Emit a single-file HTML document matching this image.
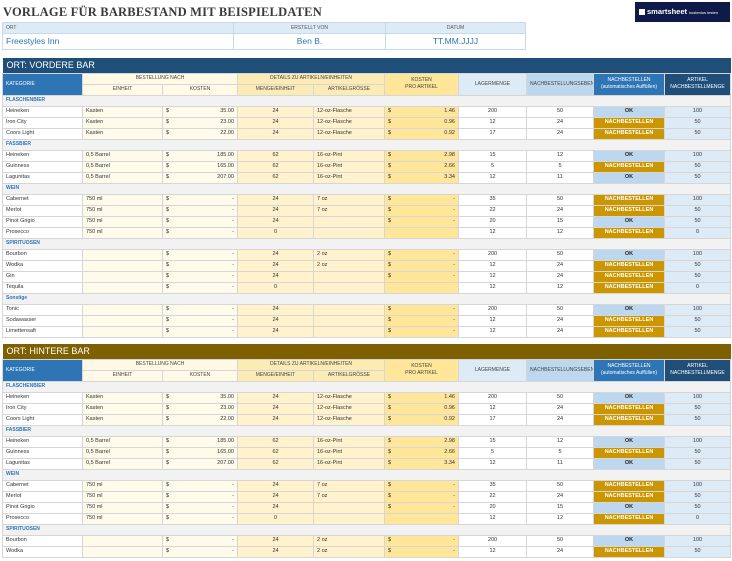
<!DOCTYPE html><html><head><meta charset="utf-8"><style>
*{box-sizing:border-box;margin:0;padding:0}
body{width:732px;height:561px;background:#fff;font-family:"Liberation Sans",sans-serif;position:relative;overflow:hidden;color:#333}
.title{position:absolute;left:3px;top:5px;font-family:"Liberation Serif",serif;font-weight:bold;font-size:12.5px;color:#3a3a3a;letter-spacing:0.2px}
.logo{position:absolute;left:635px;top:2px;width:95px;height:20px;background:#0f1a48;color:#fff;font-size:7.5px;font-weight:bold;line-height:20px;padding-left:4px;white-space:nowrap;overflow:hidden}
.logo i{display:inline-block;width:6px;height:6px;background:#fff;vertical-align:-0.5px;margin-right:2px}
.logo small{font-size:4px;font-weight:normal}
table{border-collapse:collapse;table-layout:fixed;position:absolute;left:2px}
td{border:1px solid #d6d6d6;font-size:5.5px;height:11px;line-height:9px;padding:0 3px;white-space:nowrap;overflow:hidden}
.info td{border-color:#c5d9ee}
.info .h{background:#ddebf7;text-align:center;color:#555;height:11px;font-size:5px}
.info .v{height:16px;font-size:8.5px;color:#2e75b6;text-align:center}
.sec td{height:15px;font-size:9px;color:#fff;line-height:14px;border:none;padding-left:4px}
.hd td{text-align:center;font-size:5px;color:#444;line-height:7px}
.cat td{background:#f2f2f2;color:#2e75b6;font-weight:bold;font-size:5px}
.a{background:#fff}.b{background:#fffbea}.c{background:#fffbea;text-align:right}.d{background:#fff2cc;text-align:center}.e{background:#fff2cc}.f{background:#ffe699;text-align:right}.g{text-align:center}.h{text-align:center}.j{background:#ddebf7;text-align:center}
.c s,.f s{float:left;text-decoration:none}
.ok{background:#bdd7ee;text-align:center;font-weight:bold;color:#222}
.nb{background:#cc9600;color:#fff;text-align:center;font-weight:bold}
.hk{background:#2e75b6!important;color:#fff!important;text-align:left!important}
.hb{background:#fff9e6}.hdt{background:#fdebb5}.hf{background:#ffe699}.hg{background:#ddebf7}.hh{background:#bdd7ee}.hi{background:#2e75b6;color:#fff!important}.hj{background:#1f4e79;color:#fff!important}
</style></head><body>
<div class="title">VORLAGE FÜR BARBESTAND MIT BEISPIELDATEN</div>
<div class="logo"><i></i>smartsheet <small>kostenlos testen</small></div>
<table class="info" style="top:22px;width:523px"><colgroup><col style="width:231px"><col style="width:152px"><col style="width:140px"></colgroup>
<tr><td class="h" style="text-align:left">ORT</td><td class="h">ERSTELLT VON</td><td class="h">DATUM</td></tr>
<tr><td class="v" style="text-align:left">Freestyles Inn</td><td class="v">Ben B.</td><td class="v">TT.MM.JJJJ</td></tr></table>

<table style="top:58px;width:728px"><colgroup><col style="width:80px"><col style="width:80px"><col style="width:75px"><col style="width:76px"><col style="width:71px"><col style="width:74px"><col style="width:68px"><col style="width:67px"><col style="width:71px"><col style="width:66px"></colgroup>
<tr class="sec"><td colspan="10" style="background:#1f4e79">ORT: VORDERE BAR</td></tr>
<tr class="hd"><td rowspan="2" class="hk">KATEGORIE</td><td colspan="2" class="hb">BESTELLUNG NACH</td><td colspan="2" class="hdt">DETAILS ZU ARTIKELN/EINHEITEN</td><td rowspan="2" class="hf">KOSTEN<br>PRO ARTIKEL</td><td rowspan="2" class="hg">LAGERMENGE</td><td rowspan="2" class="hh">NACHBESTELLUNGSEBENE</td><td rowspan="2" class="hi">NACHBESTELLEN<br>(automatisches Auffüllen)</td><td rowspan="2" class="hj">ARTIKEL<br>NACHBESTELLMENGE</td></tr>
<tr class="hd"><td class="hb">EINHEIT</td><td class="hb">KOSTEN</td><td class="hdt">MENGE/EINHEIT</td><td class="hdt">ARTIKELGRÖSSE</td></tr>
<tr class="cat"><td colspan="10">FLASCHENBIER</td></tr>
<tr><td class="a">Heineken</td><td class="b">Kasten</td><td class="c"><s>$</s>35.00</td><td class="d">24</td><td class="e">12-oz-Flasche</td><td class="f"><s>$</s>1.46</td><td class="g">200</td><td class="h">50</td><td class="ok">OK</td><td class="j">100</td></tr>
<tr><td class="a">Iron City</td><td class="b">Kasten</td><td class="c"><s>$</s>23.00</td><td class="d">24</td><td class="e">12-oz-Flasche</td><td class="f"><s>$</s>0.96</td><td class="g">12</td><td class="h">24</td><td class="nb">NACHBESTELLEN</td><td class="j">50</td></tr>
<tr><td class="a">Coors Light</td><td class="b">Kasten</td><td class="c"><s>$</s>22.00</td><td class="d">24</td><td class="e">12-oz-Flasche</td><td class="f"><s>$</s>0.92</td><td class="g">17</td><td class="h">24</td><td class="nb">NACHBESTELLEN</td><td class="j">50</td></tr>
<tr class="cat"><td colspan="10">FASSBIER</td></tr>
<tr><td class="a">Heineken</td><td class="b">0,5 Barrel</td><td class="c"><s>$</s>185.00</td><td class="d">62</td><td class="e">16-oz-Pint</td><td class="f"><s>$</s>2.98</td><td class="g">15</td><td class="h">12</td><td class="ok">OK</td><td class="j">100</td></tr>
<tr><td class="a">Guinness</td><td class="b">0,5 Barrel</td><td class="c"><s>$</s>165.00</td><td class="d">62</td><td class="e">16-oz-Pint</td><td class="f"><s>$</s>2.66</td><td class="g">5</td><td class="h">5</td><td class="nb">NACHBESTELLEN</td><td class="j">50</td></tr>
<tr><td class="a">Lagunitas</td><td class="b">0,5 Barrel</td><td class="c"><s>$</s>207.00</td><td class="d">62</td><td class="e">16-oz-Pint</td><td class="f"><s>$</s>3.34</td><td class="g">12</td><td class="h">11</td><td class="ok">OK</td><td class="j">50</td></tr>
<tr class="cat"><td colspan="10">WEIN</td></tr>
<tr><td class="a">Cabernet</td><td class="b">750 ml</td><td class="c"><s>$</s>-</td><td class="d">24</td><td class="e">7 oz</td><td class="f"><s>$</s>-</td><td class="g">35</td><td class="h">50</td><td class="nb">NACHBESTELLEN</td><td class="j">100</td></tr>
<tr><td class="a">Merlot</td><td class="b">750 ml</td><td class="c"><s>$</s>-</td><td class="d">24</td><td class="e">7 oz</td><td class="f"><s>$</s>-</td><td class="g">22</td><td class="h">24</td><td class="nb">NACHBESTELLEN</td><td class="j">50</td></tr>
<tr><td class="a">Pinot Grigio</td><td class="b">750 ml</td><td class="c"><s>$</s>-</td><td class="d">24</td><td class="e"></td><td class="f"><s>$</s>-</td><td class="g">20</td><td class="h">15</td><td class="ok">OK</td><td class="j">50</td></tr>
<tr><td class="a">Prosecco</td><td class="b">750 ml</td><td class="c"><s>$</s>-</td><td class="d">0</td><td class="e"></td><td class="f"></td><td class="g">12</td><td class="h">12</td><td class="nb">NACHBESTELLEN</td><td class="j">0</td></tr>
<tr class="cat"><td colspan="10">SPIRITUOSEN</td></tr>
<tr><td class="a">Bourbon</td><td class="b"></td><td class="c"><s>$</s>-</td><td class="d">24</td><td class="e">2 oz</td><td class="f"><s>$</s>-</td><td class="g">200</td><td class="h">50</td><td class="ok">OK</td><td class="j">100</td></tr>
<tr><td class="a">Wodka</td><td class="b"></td><td class="c"><s>$</s>-</td><td class="d">24</td><td class="e">2 oz</td><td class="f"><s>$</s>-</td><td class="g">12</td><td class="h">24</td><td class="nb">NACHBESTELLEN</td><td class="j">50</td></tr>
<tr><td class="a">Gin</td><td class="b"></td><td class="c"><s>$</s>-</td><td class="d">24</td><td class="e"></td><td class="f"><s>$</s>-</td><td class="g">12</td><td class="h">24</td><td class="nb">NACHBESTELLEN</td><td class="j">50</td></tr>
<tr><td class="a">Tequila</td><td class="b"></td><td class="c"><s>$</s>-</td><td class="d">0</td><td class="e"></td><td class="f"></td><td class="g">12</td><td class="h">12</td><td class="nb">NACHBESTELLEN</td><td class="j">0</td></tr>
<tr class="cat"><td colspan="10">Sonstige</td></tr>
<tr><td class="a">Tonic</td><td class="b"></td><td class="c"><s>$</s>-</td><td class="d">24</td><td class="e"></td><td class="f"><s>$</s>-</td><td class="g">200</td><td class="h">50</td><td class="ok">OK</td><td class="j">100</td></tr>
<tr><td class="a">Sodawasser</td><td class="b"></td><td class="c"><s>$</s>-</td><td class="d">24</td><td class="e"></td><td class="f"><s>$</s>-</td><td class="g">12</td><td class="h">24</td><td class="nb">NACHBESTELLEN</td><td class="j">50</td></tr>
<tr><td class="a">Limettensaft</td><td class="b"></td><td class="c"><s>$</s>-</td><td class="d">24</td><td class="e"></td><td class="f"><s>$</s>-</td><td class="g">12</td><td class="h">24</td><td class="nb">NACHBESTELLEN</td><td class="j">50</td></tr>
</table>

<table style="top:344px;width:728px"><colgroup><col style="width:80px"><col style="width:80px"><col style="width:75px"><col style="width:76px"><col style="width:71px"><col style="width:74px"><col style="width:68px"><col style="width:67px"><col style="width:71px"><col style="width:66px"></colgroup>
<tr class="sec"><td colspan="10" style="background:#7f6000">ORT: HINTERE BAR</td></tr>
<tr class="hd"><td rowspan="2" class="hk">KATEGORIE</td><td colspan="2" class="hb">BESTELLUNG NACH</td><td colspan="2" class="hdt">DETAILS ZU ARTIKELN/EINHEITEN</td><td rowspan="2" class="hf">KOSTEN<br>PRO ARTIKEL</td><td rowspan="2" class="hg">LAGERMENGE</td><td rowspan="2" class="hh">NACHBESTELLUNGSEBENE</td><td rowspan="2" class="hi">NACHBESTELLEN<br>(automatisches Auffüllen)</td><td rowspan="2" class="hj">ARTIKEL<br>NACHBESTELLMENGE</td></tr>
<tr class="hd"><td class="hb">EINHEIT</td><td class="hb">KOSTEN</td><td class="hdt">MENGE/EINHEIT</td><td class="hdt">ARTIKELGRÖSSE</td></tr>
<tr class="cat"><td colspan="10">FLASCHENBIER</td></tr>
<tr><td class="a">Heineken</td><td class="b">Kasten</td><td class="c"><s>$</s>35.00</td><td class="d">24</td><td class="e">12-oz-Flasche</td><td class="f"><s>$</s>1.46</td><td class="g">200</td><td class="h">50</td><td class="ok">OK</td><td class="j">100</td></tr>
<tr><td class="a">Iron City</td><td class="b">Kasten</td><td class="c"><s>$</s>23.00</td><td class="d">24</td><td class="e">12-oz-Flasche</td><td class="f"><s>$</s>0.96</td><td class="g">12</td><td class="h">24</td><td class="nb">NACHBESTELLEN</td><td class="j">50</td></tr>
<tr><td class="a">Coors Light</td><td class="b">Kasten</td><td class="c"><s>$</s>22.00</td><td class="d">24</td><td class="e">12-oz-Flasche</td><td class="f"><s>$</s>0.92</td><td class="g">17</td><td class="h">24</td><td class="nb">NACHBESTELLEN</td><td class="j">50</td></tr>
<tr class="cat"><td colspan="10">FASSBIER</td></tr>
<tr><td class="a">Heineken</td><td class="b">0,5 Barrel</td><td class="c"><s>$</s>185.00</td><td class="d">62</td><td class="e">16-oz-Pint</td><td class="f"><s>$</s>2.98</td><td class="g">15</td><td class="h">12</td><td class="ok">OK</td><td class="j">100</td></tr>
<tr><td class="a">Guinness</td><td class="b">0,5 Barrel</td><td class="c"><s>$</s>165.00</td><td class="d">62</td><td class="e">16-oz-Pint</td><td class="f"><s>$</s>2.66</td><td class="g">5</td><td class="h">5</td><td class="nb">NACHBESTELLEN</td><td class="j">50</td></tr>
<tr><td class="a">Lagunitas</td><td class="b">0,5 Barrel</td><td class="c"><s>$</s>207.00</td><td class="d">62</td><td class="e">16-oz-Pint</td><td class="f"><s>$</s>3.34</td><td class="g">12</td><td class="h">11</td><td class="ok">OK</td><td class="j">50</td></tr>
<tr class="cat"><td colspan="10">WEIN</td></tr>
<tr><td class="a">Cabernet</td><td class="b">750 ml</td><td class="c"><s>$</s>-</td><td class="d">24</td><td class="e">7 oz</td><td class="f"><s>$</s>-</td><td class="g">35</td><td class="h">50</td><td class="nb">NACHBESTELLEN</td><td class="j">100</td></tr>
<tr><td class="a">Merlot</td><td class="b">750 ml</td><td class="c"><s>$</s>-</td><td class="d">24</td><td class="e">7 oz</td><td class="f"><s>$</s>-</td><td class="g">22</td><td class="h">24</td><td class="nb">NACHBESTELLEN</td><td class="j">50</td></tr>
<tr><td class="a">Pinot Grigio</td><td class="b">750 ml</td><td class="c"><s>$</s>-</td><td class="d">24</td><td class="e"></td><td class="f"><s>$</s>-</td><td class="g">20</td><td class="h">15</td><td class="ok">OK</td><td class="j">50</td></tr>
<tr><td class="a">Prosecco</td><td class="b">750 ml</td><td class="c"><s>$</s>-</td><td class="d">0</td><td class="e"></td><td class="f"></td><td class="g">12</td><td class="h">12</td><td class="nb">NACHBESTELLEN</td><td class="j">0</td></tr>
<tr class="cat"><td colspan="10">SPIRITUOSEN</td></tr>
<tr><td class="a">Bourbon</td><td class="b"></td><td class="c"><s>$</s>-</td><td class="d">24</td><td class="e">2 oz</td><td class="f"><s>$</s>-</td><td class="g">200</td><td class="h">50</td><td class="ok">OK</td><td class="j">100</td></tr>
<tr><td class="a">Wodka</td><td class="b"></td><td class="c"><s>$</s>-</td><td class="d">24</td><td class="e">2 oz</td><td class="f"><s>$</s>-</td><td class="g">12</td><td class="h">24</td><td class="nb">NACHBESTELLEN</td><td class="j">50</td></tr>
</table>
</body></html>
